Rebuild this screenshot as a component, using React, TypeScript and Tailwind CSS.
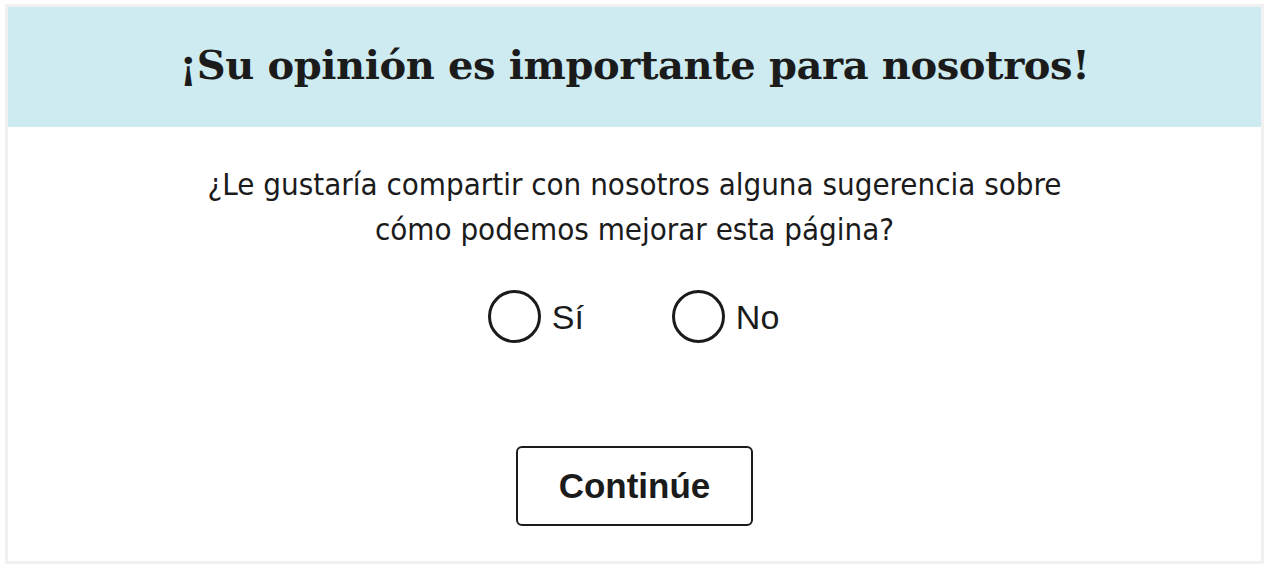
import React, { useState } from 'react';

const App: React.FC = () => {
  const [choice, setChoice] = useState<string | null>(null);

  const Radio = ({ value, label }: { value: string; label: string }) => (
    <label className="flex items-center gap-[11px] cursor-pointer" onClick={() => setChoice(value)}>
      <span className="w-[53px] h-[53px] rounded-full border-[3px] border-[#1b1b1b] flex items-center justify-center">
        {choice === value && <span className="w-[27px] h-[27px] rounded-full bg-[#1b1b1b]" />}
      </span>
      <span className="text-[34px] leading-[40px] text-[#1b1b1b] font-['Liberation_Sans',Arial,sans-serif]">{label}</span>
    </label>
  );

  return (
    <div className="bg-white w-full h-[572px] pt-[4px] pl-[5px] pr-[10px]">
      <div className="border-[3px] border-[#f1f1f1] h-[560px] flex flex-col">
        <div className="h-[120px] bg-[#cdebf0] flex items-center justify-center pb-[4px]">
          <h1 className="text-[40px] font-bold text-[#1b1b1b] font-['DejaVu_Serif',Georgia,serif] tracking-[-0.4px]">
            ¡Su opinión es importante para nosotros!
          </h1>
        </div>
        <div className="flex flex-col items-center pt-[35px]">
          <p className="text-[31px] leading-[45px] text-[#1b1b1b] text-center font-['DejaVu_Sans_Condensed','DejaVu_Sans',sans-serif]">
            ¿Le gustaría compartir con nosotros alguna sugerencia sobre
            <br />
            cómo podemos mejorar esta página?
          </p>
          <div className="flex gap-[88px] mt-[38px] ml-[-2px]">
            <Radio value="si" label="Sí" />
            <Radio value="no" label="No" />
          </div>
          <button className="mt-[103px] w-[237px] h-[80px] border-2 border-[#1b1b1b] rounded-[6px] text-[35px] font-bold text-[#1b1b1b] font-['Liberation_Sans',Arial,sans-serif]">
            Continúe
          </button>
        </div>
      </div>
    </div>
  );
};

export default App;
